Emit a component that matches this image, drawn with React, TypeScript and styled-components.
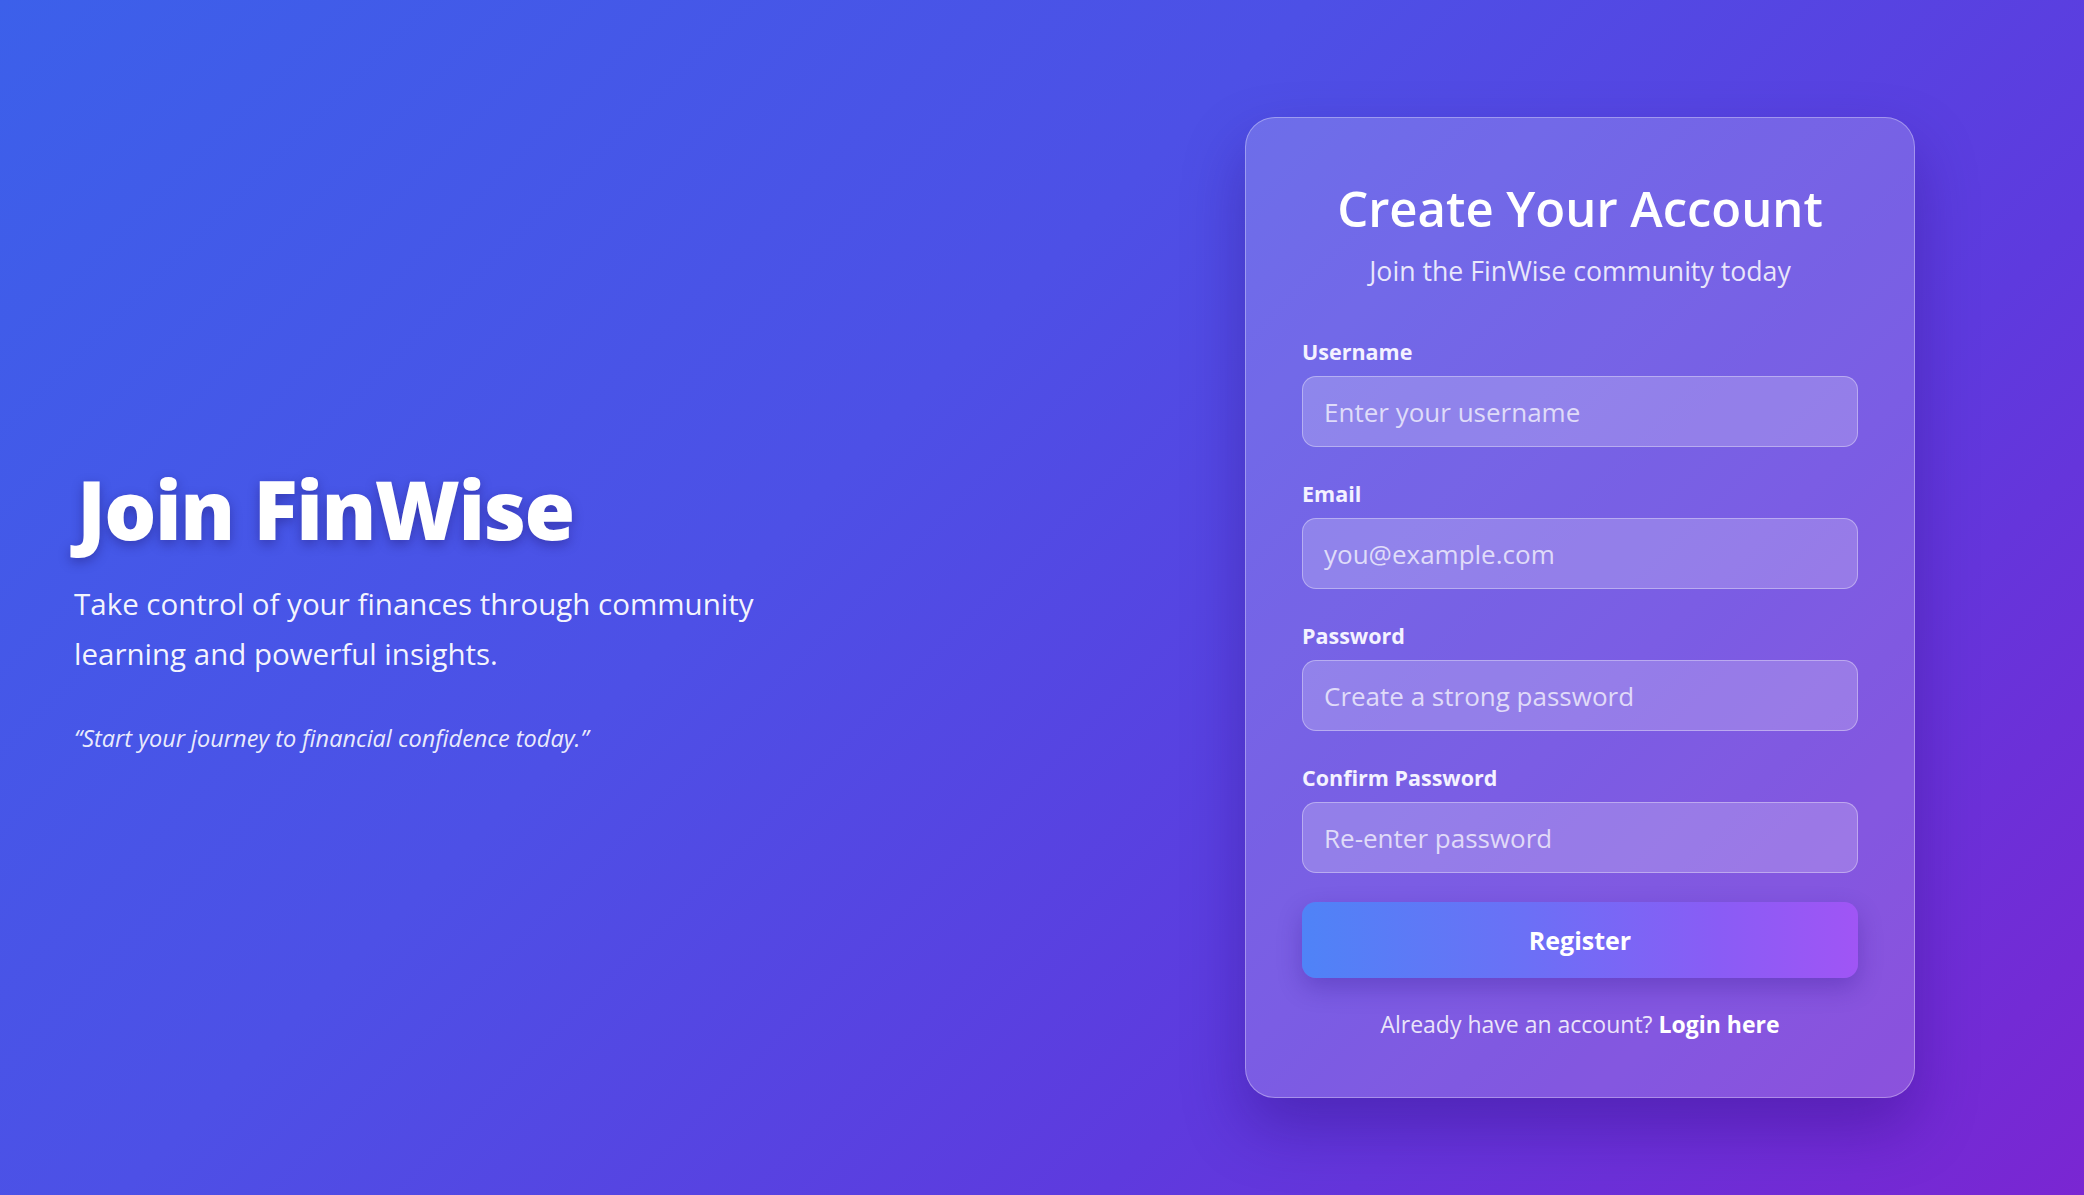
import React from 'react'
import styled, { createGlobalStyle } from 'styled-components'

const GlobalStyle = createGlobalStyle`
  * { box-sizing: border-box; }
  html, body { margin: 0; padding: 0; }
  body {
    font-family: "Segoe UI", "Open Sans", "Noto Sans", sans-serif;
    background: #4a4fe6;
  }
  input::placeholder { color: rgba(255, 255, 255, 0.72); }
`

const Page = styled.main`
  min-height: 100vh;
  height: 1195px;
  background: linear-gradient(135deg, #3c60ea 0%, #4d50e6 40%, #5e3ade 70%, #7a26d2 100%);
  display: grid;
  grid-template-columns: 1fr 860px;
  column-gap: 216px;
  align-items: center;
  padding: 20px 74px 0;
  color: #fff;
`

const Intro = styled.section`
  display: flex;
  flex-direction: column;
  padding-bottom: 2px;
`

const Headline = styled.h1`
  margin: 0 0 0 3px;
  font-size: 82px;
  font-weight: 800;
  line-height: 98px;
  letter-spacing: -1.5px;
  text-shadow: 0 4px 12px rgba(20, 10, 80, 0.35);
`

const Lead = styled.p`
  margin: 22px 0 0;
  font-size: 29.5px;
  line-height: 50px;
  max-width: 740px;
  color: rgba(255, 255, 255, 0.95);
`

const Quote = styled.p`
  margin: 43px 0 0;
  font-size: 23.5px;
  line-height: 32px;
  font-style: italic;
  color: rgba(255, 255, 255, 0.9);
`

const CardColumn = styled.div`
  display: flex;
  justify-content: center;
`

const Card = styled.div`
  width: 670px;
  padding: 60px 56px 57px;
  border-radius: 30px;
  background: rgba(255, 255, 255, 0.18);
  border: 1.5px solid rgba(255, 255, 255, 0.32);
  box-shadow: 0 30px 60px rgba(40, 10, 120, 0.35);
  display: flex;
  flex-direction: column;
`

const Title = styled.h2`
  margin: 0;
  text-align: center;
  font-size: 49px;
  font-weight: 600;
  line-height: 61px;
`

const Subtitle = styled.p`
  margin: 14px 0 0;
  text-align: center;
  font-size: 26.7px;
  line-height: 35px;
  color: rgba(255, 255, 255, 0.85);
`

const Form = styled.form`
  margin-top: 49px;
  display: flex;
  flex-direction: column;
  gap: 32px;
`

const Field = styled.label`
  display: flex;
  flex-direction: column;
  gap: 10px;
`

const LabelText = styled.span`
  font-size: 21.5px;
  line-height: 29px;
  font-weight: 700;
  color: #f4f2ff;
`

const Input = styled.input`
  height: 71px;
  padding: 0 21px;
  border-radius: 14px;
  border: 1.5px solid rgba(255, 255, 255, 0.35);
  background: rgba(255, 255, 255, 0.2);
  color: #fff;
  font-family: inherit;
  font-size: 26px;
  outline: none;
`

const Submit = styled.button`
  height: 76px;
  margin-top: -3px;
  border: 0;
  border-radius: 14px;
  background: linear-gradient(90deg, #4f83f7 0%, #6b70f6 40%, #8a5cf5 75%, #a055f5 100%);
  color: #fff;
  font-family: inherit;
  font-size: 25px;
  font-weight: 700;
  box-shadow: 0 10px 25px rgba(50, 20, 140, 0.3);
  cursor: pointer;
`

const Footer = styled.p`
  margin: 31px 0 0;
  text-align: center;
  font-size: 23px;
  line-height: 31px;
  color: rgba(255, 255, 255, 0.85);

  a {
    color: #fff;
    font-weight: 700;
    text-decoration: none;
  }
`

const App = () => {
  return (
    <>
      <GlobalStyle />
      <Page>
        <Intro>
          <Headline>Join FinWise</Headline>
          <Lead>
            Take control of your finances through community learning and powerful insights.
          </Lead>
          <Quote>“Start your journey to financial confidence today.”</Quote>
        </Intro>
        <CardColumn>
          <Card>
            <Title>Create Your Account</Title>
            <Subtitle>Join the FinWise community today</Subtitle>
            <Form onSubmit={(e) => e.preventDefault()}>
              <Field>
                <LabelText>Username</LabelText>
                <Input type="text" placeholder="Enter your username" />
              </Field>
              <Field>
                <LabelText>Email</LabelText>
                <Input type="email" placeholder="you@example.com" />
              </Field>
              <Field>
                <LabelText>Password</LabelText>
                <Input type="password" placeholder="Create a strong password" />
              </Field>
              <Field>
                <LabelText>Confirm Password</LabelText>
                <Input type="password" placeholder="Re-enter password" />
              </Field>
              <Submit type="submit">Register</Submit>
            </Form>
            <Footer>
              Already have an account? <a href="#">Login here</a>
            </Footer>
          </Card>
        </CardColumn>
      </Page>
    </>
  )
}

export default App
